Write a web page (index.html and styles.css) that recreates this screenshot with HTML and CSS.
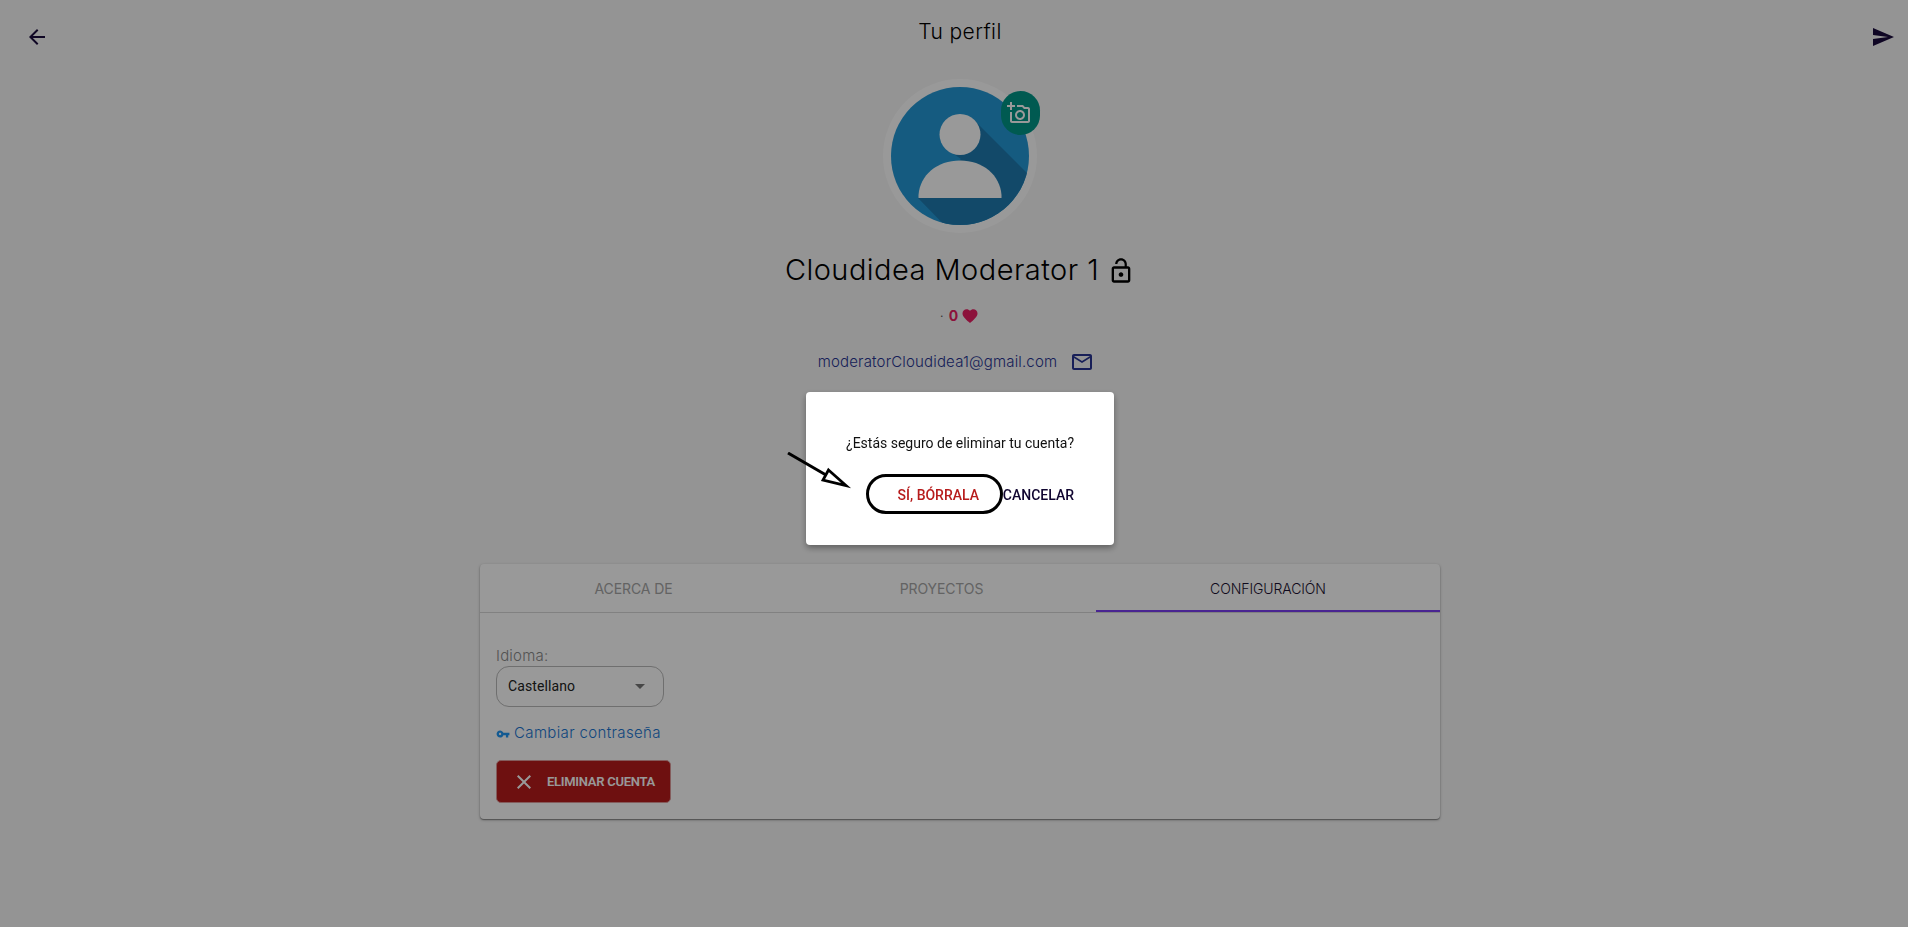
FILE: index.html
```html
<!DOCTYPE html>
<html lang="es">
<head>
<meta charset="utf-8">
<title>Tu perfil</title>
<link rel="stylesheet" href="styles.css">
</head>
<body>
<div class="page">
  <header class="topbar">
    <svg class="icon24" viewBox="0 0 24 24"><path d="M20 11H7.83l5.59-5.59L12 4l-8 8 8 8 1.41-1.41L7.83 13H20v-2z"/></svg>
    <h1 class="title"><span>Tu perfil</span></h1>
    <svg class="icon24" viewBox="0 0 24 24"><path d="M2.01 21L23 12 2.01 3 2 10l15 2-15 2z"/></svg>
  </header>
  <section class="profile">
    <div class="avatar">
      <svg class="portrait" viewBox="0 0 138 138">
        <defs><clipPath id="disc"><circle cx="69" cy="69" r="69"/></clipPath></defs>
        <g clip-path="url(#disc)">
          <rect width="138" height="138" fill="#2398d5"/>
          <path d="M84 34L150 100V150H65L27 111L70 72L54 61Z" fill="#1e7bb0"/>
          <circle cx="69" cy="47.500" r="20.500" fill="#fff"/>
          <path d="M27.500 111V108C29 88 46 73.500 69 73.500S109 88 110.500 108V111Z" fill="#fff"/>
        </g>
      </svg>
      <span class="badge"><svg class="icon24" viewBox="0 0 24 24"><path d="M21 6h-3.170L16 4h-6v2h5.120l1.830 2H21v12H5v-9H3v9c0 1.100.9 2 2 2h16c1.100 0 2-.9 2-2V8c0-1.100-.9-2-2-2zM8 14c0 2.760 2.240 5 5 5s5-2.240 5-5-2.240-5-5-5-5 2.240-5 5zm5-3c1.650 0 3 1.350 3 3s-1.350 3-3 3-3-1.350-3-3 1.350-3 3-3zM5 6h3V4H5V1H3v3H0v2h3v3h2z"/></svg></span>
    </div>
    <h2 class="name"><span>Cloudidea Moderator 1</span>
      <svg class="lock" viewBox="0 0 24 24"><path d="M12 17c1.100 0 2-.9 2-2s-.9-2-2-2-2 .9-2 2 .9 2 2 2zm6-9h-1V6c0-2.760-2.240-5-5-5S7 3.240 7 6h1.900c0-1.710 1.390-3.100 3.100-3.100s3.100 1.390 3.100 3.100v2H6c-1.100 0-2 .9-2 2v10c0 1.100.9 2 2 2h12c1.100 0 2-.9 2-2V10c0-1.100-.9-2-2-2zm0 12H6V10h12v10z"/></svg></h2>
    <p class="likes"><span class="dot">·</span><b>0</b>
      <svg class="heart" viewBox="0 0 24 24"><path d="M12 21.350l-1.450-1.320C5.400 15.360 2 12.280 2 8.500 2 5.420 4.420 3 7.500 3c1.740 0 3.410.81 4.500 2.090C13.090 3.810 14.760 3 16.500 3 19.580 3 22 5.420 22 8.500c0 3.780-3.400 6.860-8.550 11.540L12 21.350z"/></svg></p>
    <p class="email"><span>moderatorCloudidea1@gmail.com</span>
      <svg class="icon24" viewBox="0 0 24 24"><path d="M22 6c0-1.100-.9-2-2-2H4c-1.100 0-2 .9-2 2v12c0 1.100.9 2 2 2h16c1.100 0 2-.9 2-2V6zm-2 0l-8 5-8-5h16zm0 12H4V8l8 5 8-5v10z"/></svg></p>
  </section>
  <main class="card">
    <nav class="tabs">
      <a class="tab"><span class="about">ACERCA DE</span></a>
      <a class="tab"><span class="projects">PROYECTOS</span></a>
      <a class="tab active"><span class="config">CONFIGURACIÓN</span></a>
    </nav>
    <div class="settings">
      <label class="label"><span>Idioma:</span></label>
      <div class="select"><span>Castellano</span><i class="caret"></i></div>
      <a class="password">
        <svg class="key" viewBox="0 0 24 24"><path d="M12.650 10C11.830 7.670 9.610 6 7 6c-3.310 0-6 2.690-6 6s2.690 6 6 6c2.610 0 4.830-1.670 5.650-4H17v4h4v-4h2v-4H12.650zM7 14c-1.100 0-2-.9-2-2s.9-2 2-2 2 .9 2 2-.9 2-2 2z"/></svg>
        <span>Cambiar contraseña</span></a>
      <button class="delete">
        <svg class="icon24" viewBox="0 0 24 24"><path d="M19 6.410L17.590 5 12 10.590 6.410 5 5 6.410 10.590 12 5 17.590 6.410 19 12 13.410 17.590 19 19 17.590 13.410 12z"/></svg>
        <span>ELIMINAR CUENTA</span></button>
    </div>
  </main>
</div>
<div class="overlay">
  <div class="dialog">
    <p class="question"><span>¿Estás seguro de eliminar tu cuenta?</span></p>
    <div class="actions">
      <button class="confirm"><span>SÍ, BÓRRALA</span></button>
      <button class="cancel"><span>CANCELAR</span></button>
    </div>
    <svg class="pointer" viewBox="0 0 66 40"><path d="M1 1L39 23" fill="none" stroke="#000" stroke-width="3"/><path d="M41.500 18L59 33.500L36 28Z" fill="none" stroke="#000" stroke-width="2.800" stroke-miterlimit="8"/></svg>
  </div>
</div>
</body>
</html>
```

FILE: styles.css
```css
* { box-sizing: border-box; }
body { margin: 0; font-family: Inter, "Open Sans", sans-serif; font-weight: 300; color: #000; }
h1, h2, p { margin: 0; font-weight: 300; }
svg { display: block; flex: none; fill: currentColor; }
span { white-space: nowrap; }
button { font-family: Roboto, sans-serif; border: 0; background: none; padding: 0; }
.icon24 { width: 24px; height: 24px; }
.page { height: 927px; background: #f7f7f7; overflow: hidden; }

.topbar { height: 79px; padding: 25px 13px 0 25px; display: flex; justify-content: space-between; align-items: flex-start; color: #1a0a3c; }
.title { font-size: 21px; line-height: 26px; margin-top: -6px; color: #000; }
.title span { letter-spacing: 0.400px; }

.profile { height: 485px; display: flex; flex-direction: column; align-items: center; padding-left: 12px; }
.avatar { position: relative; width: 154px; height: 154px; border: 8px solid #fff; border-radius: 50%; }
.portrait { width: 138px; height: 138px; }
.badge { position: absolute; left: 110px; top: 4px; width: 39px; height: 44px; border-radius: 20px; background: #009688; color: #fff; display: flex; align-items: center; justify-content: center; padding-right: 3px; }
.name { margin-top: 19px; height: 36px; display: flex; align-items: center; gap: 8px; font-size: 29px; line-height: 36px; letter-spacing: 0.460px; }
.lock { width: 28px; height: 28px; margin-top: 1px; }
.likes { margin: 17px 1px 0 0; height: 22px; display: flex; align-items: center; color: #e91e63; font-size: 14px; line-height: 22px; }
.likes b { font-weight: 700; margin: 0 3px 0 5px; }
.dot { color: #555; }
.heart { width: 18px; height: 18px; }
.email { margin: 23px 8px 0 0; height: 24px; display: flex; align-items: center; gap: 13px; font-size: 15px; line-height: 24px; letter-spacing: 0.170px; color: #283593; }

.card { width: 960px; height: 255px; margin-left: 480px; background: #fff; border-radius: 4px; box-shadow: 0 1px 3px rgba(0,0,0,.3), 0 1px 1px rgba(0,0,0,.3); }
.tabs { display: grid; grid-template-columns: 307px 309px 344px; height: 49px; border-bottom: 1px solid #d8d8d8; }
.tab { display: flex; align-items: center; justify-content: center; font-size: 14px; letter-spacing: -0.100px; font-weight: 400; color: #a5a5a5; padding-top: 1px; }
.tab.active { color: #1a1030; font-weight: 300; border-bottom: 2px solid #7b3ff2; padding-top: 2px; }
.settings { padding: 35px 16px 0; display: flex; flex-direction: column; align-items: flex-start; }
.label { height: 18px; line-height: 16px; font-size: 15px; letter-spacing: 0.200px; color: #8a8a8a; }
.select { width: 168px; height: 41px; border: 1px solid #b9b9b9; border-radius: 13px; padding: 0 18px 1px 11px; display: flex; align-items: center; justify-content: space-between; font: 400 14px Roboto, sans-serif; letter-spacing: 0.100px; color: #222; }
.caret { border: 5px solid transparent; border-top-color: #777; border-bottom: 0; margin-top: 1px; }
.password { margin-top: 15px; height: 22px; display: flex; align-items: center; gap: 4px; font-size: 15px; line-height: 22px; letter-spacing: 0.360px; color: #1976d2; }
.key { width: 14px; height: 14px; color: #2196f3; margin-top: 1px; }
.delete { margin: 16px 0 0; width: 175px; height: 43px; border: 1px solid #d99; border-radius: 5px; background: #b71c1c; color: #fff; display: flex; align-items: center; padding-left: 15px; gap: 11px; font-size: 13px; font-weight: 600; letter-spacing: -0.280px; }

.overlay { position: fixed; inset: 0; background: rgba(0,0,0,.4); display: flex; align-items: flex-start; padding: 392px 0 0 806px; }
.dialog { position: relative; width: 308px; height: 153px; padding: 41px 40px 40px; background: #fff; border-radius: 4px; box-shadow: 0 3px 6px rgba(0,0,0,.35); font-family: Roboto, sans-serif; }
.question { height: 20px; line-height: 20px; font-size: 14px; font-weight: 400; color: #111; }
.actions { display: flex; align-items: center; justify-content: flex-end; margin-top: 21px; }
.confirm { width: 137px; height: 40px; border: 3px solid #000; border-radius: 20px; padding: 1px 0 0 8px; color: #b71c1c; font-size: 14px; font-weight: 500; }
.cancel { color: #100530; font-size: 14px; font-weight: 500; padding-top: 1px; }
.pointer { position: absolute; left: -19px; top: 60px; width: 66px; height: 40px; }
```
